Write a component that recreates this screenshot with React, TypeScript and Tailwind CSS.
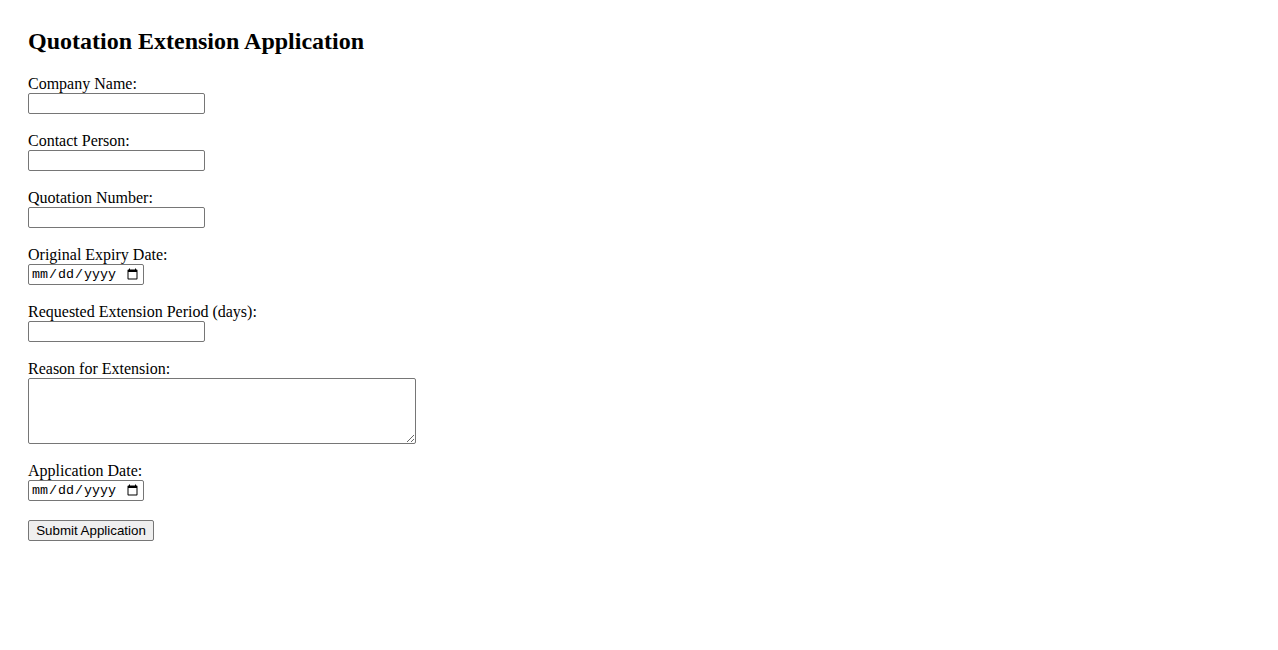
import React from 'react'

const textInput = "w-[177px] h-[21px] border border-[#767676] rounded-[2px] px-[2px] bg-white font-['Liberation_Sans',Arial,sans-serif] text-[13.33px]"
const dateInput = "w-[116px] h-[21px] border border-[#767676] rounded-[2px] px-[2px] bg-white font-['Liberation_Mono',monospace] text-[13.33px] text-black"

function Field({ label, children }: { label: string; children: React.ReactNode }) {
  return (
    <div className="flex flex-col items-start mb-[18px]">
      <label className="h-[18px] leading-[18px]">{label}</label>
      {children}
    </div>
  )
}

export default function App() {
  return (
    <div className="min-h-screen bg-white text-black font-['Liberation_Serif','Times_New_Roman',serif] text-[16px] px-[28px] pt-[28px]">
      <h2 className="text-[24px] font-bold leading-[27px] mb-[20px]">Quotation Extension Application</h2>
      <form className="flex flex-col items-start" onSubmit={e => e.preventDefault()}>
        <Field label="Company Name:">
          <input type="text" className={textInput} />
        </Field>
        <Field label="Contact Person:">
          <input type="text" className={textInput} />
        </Field>
        <Field label="Quotation Number:">
          <input type="text" className={textInput} />
        </Field>
        <Field label="Original Expiry Date:">
          <input type="date" className={dateInput} />
        </Field>
        <Field label="Requested Extension Period (days):">
          <input type="number" className={textInput} />
        </Field>
        <Field label="Reason for Extension:">
          <textarea className="w-[388px] h-[66px] border border-[#767676] rounded-[2px] px-[2px] bg-white font-['Liberation_Mono',monospace] text-[13.33px]" />
        </Field>
        <Field label="Application Date:">
          <input type="date" className={dateInput} />
        </Field>
        <button
          type="submit"
          className="mt-[1px] w-[126px] h-[21px] border border-[#767676] rounded-[2px] bg-[#efefef] font-['Liberation_Sans',Arial,sans-serif] text-[13.33px] leading-none text-black"
        >
          Submit Application
        </button>
      </form>
    </div>
  )
}
